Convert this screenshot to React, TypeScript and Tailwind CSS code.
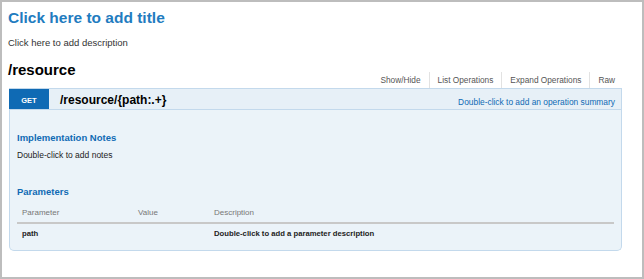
import React from 'react';

const links = ['Show/Hide', 'List Operations', 'Expand Operations', 'Raw'];

export default function App() {
  return (
    <div
      className="w-[644px] h-[279px] border-2 border-[#bdbdbd] bg-white overflow-hidden"
      style={{ fontFamily: '"Liberation Sans", Arial, sans-serif' }}
    >
      <div className="pl-[6px] pr-[20px] pt-[7px]">
        {/* Title + description */}
        <h1 className="text-[15.5px] leading-[18px] font-bold text-[#1f7cbf]">Click here to add title</h1>
        <p className="mt-[10px] text-[9.5px] leading-[12px] text-[#333]">Click here to add description</p>

        {/* Resource heading */}
        <div className="mt-[12px] flex items-end justify-between">
          <h2 className="mb-[9px] text-[15px] leading-[18px] font-bold text-black">/resource</h2>
          <ul className="flex mr-[-1px]">
            {links.map((l, i) => (
              <li
                key={l}
                className={`h-[16px] px-2 text-[8.3px] leading-[16px] text-[#555] ${i > 0 ? 'border-l border-[#e2e2e2]' : ''}`}
              >
                {l}
              </li>
            ))}
          </ul>
        </div>

        {/* Operation */}
        <div className="ml-[1px]">
          <div className="flex h-[22px] border border-[#c3d9ec] bg-[#e7f0f7]">
            <div className="-ml-px w-[40px] h-full bg-[#0f6ab4] text-white text-[7.5px] font-bold leading-[20px] pt-[2px] text-center">
              GET
            </div>
            <div className="ml-[11px] pt-[1px] text-[12px] font-bold leading-[20px] text-black">/resource/{'{path:.+}'}</div>
            <div className="ml-auto pr-[6px] pt-[3px] text-[8.4px] leading-[20px] text-[#0f6ab4]">
              Double-click to add an operation summary
            </div>
          </div>

          <div className="border-x border-b border-[#c3d9ec] bg-[#ebf3f9] rounded-b-[5px] px-[7px] pt-[22px] pb-[10px]">
            <h4 className="text-[9.5px] leading-[12px] font-bold text-[#0f6ab4]">Implementation Notes</h4>
            <p className="mt-[5px] text-[8.5px] leading-[12px] text-[#222]">Double-click to add notes</p>

            <h4 className="mt-[25px] text-[9.5px] leading-[12px] font-bold text-[#0f6ab4]">Parameters</h4>
            <table className="mt-[9px] w-full border-collapse">
              <thead>
                <tr className="border-b-2 border-[#c8c8c8]">
                  <th className="w-[116px] pl-[5px] pb-[3px] text-left text-[8px] leading-[12px] font-normal text-[#777]">Parameter</th>
                  <th className="w-[76px] pl-[5px] pb-[3px] text-left text-[8px] leading-[12px] font-normal text-[#777]">Value</th>
                  <th className="pl-[5px] pb-[3px] text-left text-[8px] leading-[12px] font-normal text-[#777]">Description</th>
                </tr>
              </thead>
              <tbody>
                <tr>
                  <td className="pl-[5px] pt-[4px] text-[7.7px] leading-[12px] font-bold text-[#222]">path</td>
                  <td className="pl-[5px] pt-[4px]"></td>
                  <td className="pl-[5px] pt-[4px] text-[7.7px] leading-[12px] font-bold text-[#222]">
                    Double-click to add a parameter description
                  </td>
                </tr>
              </tbody>
            </table>
          </div>
        </div>
      </div>
    </div>
  );
}
